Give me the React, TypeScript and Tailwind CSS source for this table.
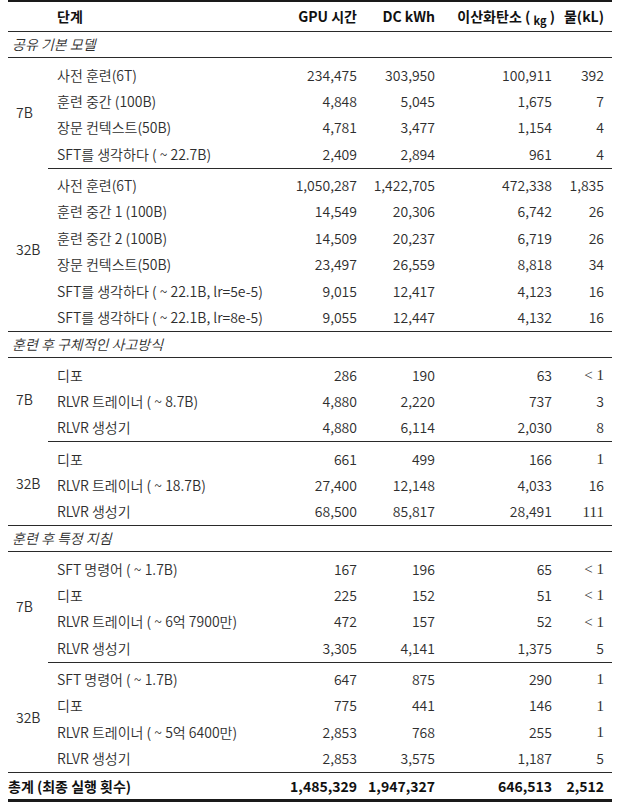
import React from "react";

type Row = [React.ReactNode, string, string, string, React.ReactNode];
type Group = { label: string; rows: Row[] };
type Section = { title: string; groups: Group[] };

const lt1 = <span className="font-['Liberation_Serif',serif] text-[15px]">&lt; 1</span>;
const s1 = <span className="font-['Liberation_Serif',serif] text-[15px]">1</span>;
const s111 = <span className="font-['Liberation_Serif',serif] text-[15px]">111</span>;

const sections: Section[] = [
  {
    title: "공유 기본 모델",
    groups: [
      {
        label: "7B",
        rows: [
          ["사전 훈련(6T)", "234,475", "303,950", "100,911", "392"],
          ["훈련 중간 (100B)", "4,848", "5,045", "1,675", "7"],
          ["장문 컨텍스트(50B)", "4,781", "3,477", "1,154", "4"],
          ["SFT를 생각하다 ( ~ 22.7B)", "2,409", "2,894", "961", "4"],
        ],
      },
      {
        label: "32B",
        rows: [
          ["사전 훈련(6T)", "1,050,287", "1,422,705", "472,338", "1,835"],
          ["훈련 중간 1 (100B)", "14,549", "20,306", "6,742", "26"],
          ["훈련 중간 2 (100B)", "14,509", "20,237", "6,719", "26"],
          ["장문 컨텍스트(50B)", "23,497", "26,559", "8,818", "34"],
          ["SFT를 생각하다 ( ~ 22.1B, lr=5e-5)", "9,015", "12,417", "4,123", "16"],
          ["SFT를 생각하다 ( ~ 22.1B, lr=8e-5)", "9,055", "12,447", "4,132", "16"],
        ],
      },
    ],
  },
  {
    title: "훈련 후 구체적인 사고방식",
    groups: [
      {
        label: "7B",
        rows: [
          ["디포", "286", "190", "63", lt1],
          ["RLVR 트레이너 ( ~ 8.7B)", "4,880", "2,220", "737", "3"],
          ["RLVR 생성기", "4,880", "6,114", "2,030", "8"],
        ],
      },
      {
        label: "32B",
        rows: [
          ["디포", "661", "499", "166", s1],
          ["RLVR 트레이너 ( ~ 18.7B)", "27,400", "12,148", "4,033", "16"],
          ["RLVR 생성기", "68,500", "85,817", "28,491", s111],
        ],
      },
    ],
  },
  {
    title: "훈련 후 특정 지침",
    groups: [
      {
        label: "7B",
        rows: [
          ["SFT 명령어 ( ~ 1.7B)", "167", "196", "65", lt1],
          ["디포", "225", "152", "51", lt1],
          ["RLVR 트레이너 ( ~ 6억 7900만)", "472", "157", "52", lt1],
          ["RLVR 생성기", "3,305", "4,141", "1,375", "5"],
        ],
      },
      {
        label: "32B",
        rows: [
          ["SFT 명령어 ( ~ 1.7B)", "647", "875", "290", s1],
          ["디포", "775", "441", "146", s1],
          ["RLVR 트레이너 ( ~ 5억 6400만)", "2,853", "768", "255", s1],
          ["RLVR 생성기", "2,853", "3,575", "1,187", "5"],
        ],
      },
    ],
  },
];

function FullRule() {
  return (
    <tr>
      <td colSpan={6} className="p-0">
        <div className="h-px bg-[#2a2a2a]" />
      </td>
    </tr>
  );
}

function PartRule() {
  return (
    <tr>
      <td className="p-0" />
      <td colSpan={5} className="p-0">
        <div className="h-px bg-[#2a2a2a]" />
      </td>
    </tr>
  );
}

export default function App() {
  return (
    <div className="w-[630px] h-[808px] bg-white pl-[8px] font-['Noto_Sans_CJK_KR','Noto_Sans',sans-serif] text-[14px] font-[350] text-[#2e2e2e]">
      <div className="w-[604px] h-[2px] bg-[#1a1a1a]" />
      <table className="w-[604px] table-fixed border-collapse">
        <colgroup>
          <col className="w-[40px]" />
          <col className="w-[229px]" />
          <col className="w-[80px]" />
          <col className="w-[78px]" />
          <col className="w-[117px]" />
          <col className="w-[60px]" />
        </colgroup>
        <tbody>
          <tr className="h-[29px] font-bold text-[#111]">
            <td />
            <td className="text-left pl-[9px]">단계</td>
            <td className="text-right whitespace-nowrap">GPU 시간</td>
            <td className="text-right whitespace-nowrap">DC kWh</td>
            <td className="text-right whitespace-nowrap">
              <span className="relative left-[3px]">
                이산화탄소 ( <sub className="text-[11px] bottom-[-0.3em]">kg</sub> )
              </span>
            </td>
            <td className="text-right pr-[8px] whitespace-nowrap">물(kL)</td>
          </tr>
          <FullRule />
          {sections.map((sec, si) => (
            <React.Fragment key={si}>
              <tr className="h-[25px]">
                <td colSpan={6} className="pl-[4px] italic text-left whitespace-nowrap">
                  {sec.title}
                </td>
              </tr>
              <FullRule />
              {sec.groups.map((g, gi) => {
                const lastGroup = gi === sec.groups.length - 1;
                return (
                  <React.Fragment key={gi}>
                    {g.rows.map((r, ri) => {
                      const first = ri === 0;
                      const rowH = first ? "h-[30px]" : "h-[26.5px]";
                      const pad = first ? "pt-[4px]" : "";
                      return (
                        <tr key={ri} className={rowH}>
                          {first && (
                            <td rowSpan={g.rows.length} className="pl-[8px] align-middle whitespace-nowrap">
                              {g.label}
                            </td>
                          )}
                          <td className={`pl-[9px] whitespace-nowrap ${pad}`}>{r[0]}</td>
                          <td className={`text-right whitespace-nowrap ${pad}`}>{r[1]}</td>
                          <td className={`text-right whitespace-nowrap ${pad}`}>{r[2]}</td>
                          <td className={`text-right whitespace-nowrap ${pad}`}>{r[3]}</td>
                          <td className={`text-right pr-[8px] whitespace-nowrap ${pad}`}>{r[4]}</td>
                        </tr>
                      );
                    })}
                    {lastGroup ? <FullRule /> : <PartRule />}
                  </React.Fragment>
                );
              })}
            </React.Fragment>
          ))}
          <tr className="h-[26px] font-bold text-[#111]">
            <td colSpan={2} className="pl-0 whitespace-nowrap">총계 (최종 실행 횟수)</td>
            <td className="text-right whitespace-nowrap">1,485,329</td>
            <td className="text-right whitespace-nowrap">1,947,327</td>
            <td className="text-right whitespace-nowrap">646,513</td>
            <td className="text-right pr-[8px] whitespace-nowrap">2,512</td>
          </tr>
        </tbody>
      </table>
      <div className="w-[604px] h-[3px] bg-[#1a1a1a]" />
    </div>
  );
}
